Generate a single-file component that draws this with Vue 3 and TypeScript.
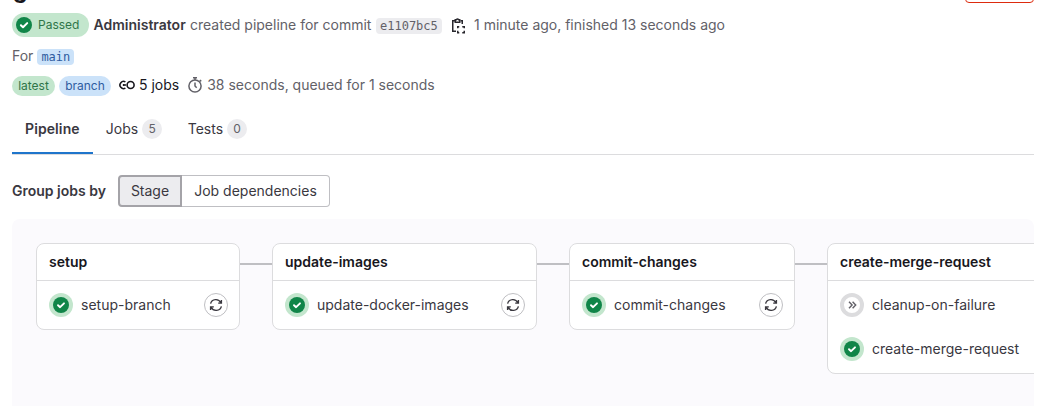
<script setup lang="ts">
interface Job {
  name: string
  status: 'success' | 'skipped'
  retry: boolean
}
interface Stage {
  name: string
  width: number
  jobs: Job[]
}

const stages: Stage[] = [
  { name: 'setup', width: 204, jobs: [{ name: 'setup-branch', status: 'success', retry: true }] },
  { name: 'update-images', width: 265, jobs: [{ name: 'update-docker-images', status: 'success', retry: true }] },
  { name: 'commit-changes', width: 226, jobs: [{ name: 'commit-changes', status: 'success', retry: true }] },
  {
    name: 'create-merge-request',
    width: 244,
    jobs: [
      { name: 'cleanup-on-failure', status: 'skipped', retry: false },
      { name: 'create-merge-request', status: 'success', retry: false },
    ],
  },
]
const tabs = [
  { label: 'Pipeline', count: null, active: true },
  { label: 'Jobs', count: 5, active: false },
  { label: 'Tests', count: 0, active: false },
]
</script>

<template>
  <main class="page">
    <header class="top">
      <h1 class="title">g</h1>
      <div class="danger-button"></div>
    </header>

    <div class="row summary">
      <span class="status">
        <svg width="16" height="16" viewBox="0 0 16 16"><circle cx="8" cy="8" r="8" fill="#108548" /><path d="M4.9 8.2 7 10.3l4.2-4.2" fill="none" stroke="#fff" stroke-width="2" stroke-linecap="round" stroke-linejoin="round" /></svg>
        <span class="status-label">Passed</span>
      </span>
      <b class="author">Administrator</b>
      <span class="created">created pipeline for commit</span>
      <code class="commit">e1107bc5</code>
      <svg class="copy" width="16" height="16" viewBox="0 0 16 16" fill="none" stroke="#28272d" stroke-width="1.5">
        <path d="M5 2.75H2.75v10.5H6M10.5 2.75h1.75V6" />
        <path d="M5.25 4.25v-2.5h1.2a1.15 1.15 0 0 1 2.1 0h1.2v2.5z" />
        <path d="M7.75 10.2V8.75h1.5M12.25 8.75h2v1.45M14.25 12.8v1.95h-2M9.25 14.75h-1.5V12.8" />
      </svg>
      <span class="times">1 minute ago, finished 13 seconds ago</span>
    </div>

    <div class="row ref"><span>For</span><code class="branch-ref">main</code></div>

    <div class="row badges">
      <span class="badge green">latest</span>
      <span class="badge blue">branch</span>
      <svg class="pipeline-icon" width="16" height="16" viewBox="0 0 16 16" fill="none" stroke="#18171d" stroke-width="1.6">
        <circle cx="11.6" cy="8" r="3.5" />
        <path d="M6.4 4.9A3.6 3.6 0 1 0 6.4 11.1M4.1 8h2.9" />
        <circle cx="4.7" cy="8" r="1" fill="#18171d" stroke="none" />
      </svg>
      <span class="job-count">5 jobs</span>
      <svg class="timer" width="16" height="16" viewBox="0 0 16 16" fill="none" stroke="#626168" stroke-width="1.5">
        <circle cx="8" cy="9" r="6.1" />
        <path d="M6 .8h4M8 .8V3M8 5.5V9l1.7 1.7M12.8 3l1.4 1.4" />
      </svg>
      <span class="duration">38 seconds, queued for 1 seconds</span>
    </div>

    <nav class="tabs">
      <a v-for="tab in tabs" :key="tab.label" class="tab" :class="{ active: tab.active }">
        <span>{{ tab.label }}</span>
        <span v-if="tab.count !== null" class="count">{{ tab.count }}</span>
      </a>
    </nav>

    <div class="grouping">
      <span class="group-label">Group jobs by</span>
      <div class="segmented">
        <button class="segment selected">Stage</button>
        <button class="segment last">Job dependencies</button>
      </div>
    </div>

    <section class="graph">
      <template v-for="(stage, i) in stages" :key="stage.name">
        <span v-if="i > 0" class="link"></span>
        <article class="stage" :style="{ width: stage.width + 'px' }">
          <h2 class="stage-name">{{ stage.name }}</h2>
          <div class="jobs">
            <div v-for="job in stage.jobs" :key="job.name" class="job">
              <svg v-if="job.status === 'success'" width="24" height="24" viewBox="0 0 24 24"><circle cx="12" cy="12" r="12" fill="#c3e6cd" /><circle cx="12" cy="12" r="8" fill="#108548" /><path d="m9 12.2 2.1 2L15 10.3" fill="none" stroke="#fff" stroke-width="1.9" stroke-linecap="round" stroke-linejoin="round" /></svg>
              <svg v-else width="24" height="24" viewBox="0 0 24 24"><circle cx="12" cy="12" r="10" fill="#fff" stroke="#dcdcde" stroke-width="4" /><path d="m9 8.8 3.1 3.2L9 15.2M12.6 8.8l3.1 3.2-3.1 3.2" fill="none" stroke="#626168" stroke-width="1.4" /></svg>
              <span class="job-name">{{ job.name }}</span>
              <span v-if="job.retry" class="retry">
                <svg width="14" height="14" viewBox="0 0 14 14" fill="none" stroke="#3a383f" stroke-width="1.4"><path d="M1.6 5.6A5.4 5.2 0 0 1 11.8 4.7M12.4 1.9v3.2H9.2M12.4 8.4A5.4 5.2 0 0 1 2.2 9.3M1.6 12.1V8.9h3.2" /></svg>
              </span>
            </div>
          </div>
        </article>
      </template>
    </section>
  </main>
</template>

<style>
body { background: #fff; overflow: hidden; }
</style>

<style scoped>
* { box-sizing: border-box; }
.page { width: 1034px; height: 406px; padding-left: 12px; overflow: hidden; font: 14px/20px Inter, sans-serif; color: #626168; white-space: nowrap; }
.top { display: flex; justify-content: space-between; align-items: flex-end; height: 12px; padding-bottom: 9px; }
.title { margin: 0; font-size: 23px; line-height: 28px; font-weight: 700; color: #18171d; height: 27px; padding-left: 1px; }
.danger-button { width: 69px; height: 20px; border: 1px solid #dd2b0e; border-radius: 4px; }
.row { display: flex; align-items: center; }
.summary { height: 26px; }
.status { display: flex; align-items: center; width: 77px; height: 24px; padding-left: 4px; border-radius: 12px; background: #c3e6cd; color: #2f7549; }
.status-label { margin-left: 6px; font-size: 12px; }
.author { width: 93px; margin-left: 4.5px; color: #3a383f; font-weight: 600; }
.created { width: 182px; margin-left: 3.5px; }
code { font-family: "DejaVu Sans Mono", monospace; display: block; height: 16px; line-height: 16px; border-radius: 4px; padding: 0 4px; font-size: 12px; }
.commit { width: 66px; margin-left: 4px; margin-top: 1px; background: #ececef; color: #626168; }
.copy { margin-left: 8px; margin-top: 2px; }
.times { margin-left: 8px; }
.ref { height: 20px; margin-top: 8px; }
.branch-ref { width: 37px; margin-left: 4px; margin-top: 1px; background: #cbe2f9; color: #2f5ca0; }
.badges { height: 20px; margin-top: 10px; }
.badge { height: 20px; border-radius: 10px; font-size: 12px; line-height: 20px; text-align: center; }
.green { width: 43px; background: #c3e6cd; color: #2f7549; }
.blue { width: 52px; margin-left: 4px; background: #cbe2f9; color: #2f5ca0; }
.pipeline-icon { margin: 0 0 2px 7.5px; }
.job-count { margin: 0 0 2px 4.5px; color: #18171d; }
.timer { margin: 0 0 2px 8px; }
.duration { margin: 0 0 2px 4px; }
.tabs { display: flex; height: 50px; margin-top: 9px; border-bottom: 1px solid #dcdcde; }
.tab { display: flex; align-items: center; height: 49px; padding: 0 12.8px 1px; color: #3a383f; }
.active { width: 81px; padding: 1px 13px 0; letter-spacing: 0.1px; font-weight: 600; border-bottom: 2px solid #1f75cb; }
.count { width: 20px; height: 20px; margin-left: 4px; border-radius: 10px; background: #ececef; color: #626168; font-size: 12px; text-align: center; }
.grouping { display: flex; align-items: center; height: 32px; margin-top: 20px; }
.group-label { width: 106px; font-weight: 600; color: #3a383f; }
.segmented { display: flex; }
.segment { height: 32px; margin: 0; padding: 0; font: inherit; color: #3a383f; background: #fff; border: 1px solid #bfbfc3; }
.selected { width: 64px; background: #ececef; border: 2px solid #a4a3a8; border-radius: 4px 0 0 4px; }
.last { width: 148px; border-left: 0; border-radius: 0 4px 4px 0; }
.graph { display: flex; align-items: flex-start; height: 200px; margin-top: 12px; padding: 24px; background: #fbfafd; border-radius: 8px; overflow: hidden; }
.link { flex: none; width: 32px; height: 2px; margin-top: 20px; background: #bfbfc3; }
.stage { flex: none; background: #fff; border: 1px solid #dcdcde; border-radius: 8px; }
.stage-name { margin: 0; height: 37px; padding: 0 12px; border-bottom: 1px solid #dcdcde; font-size: 14px; line-height: 35px; font-weight: 600; color: #18171d; }
.jobs { display: flex; flex-direction: column; gap: 20px; padding: 12px 11px 12px 12px; }
.job { display: flex; align-items: center; height: 24px; }
.job-name { margin-left: 8px; color: #3a383f; }
.retry { display: flex; align-items: center; justify-content: center; width: 24px; height: 24px; margin-left: auto; border: 1px solid #bfbfc3; border-radius: 50%; }
</style>
